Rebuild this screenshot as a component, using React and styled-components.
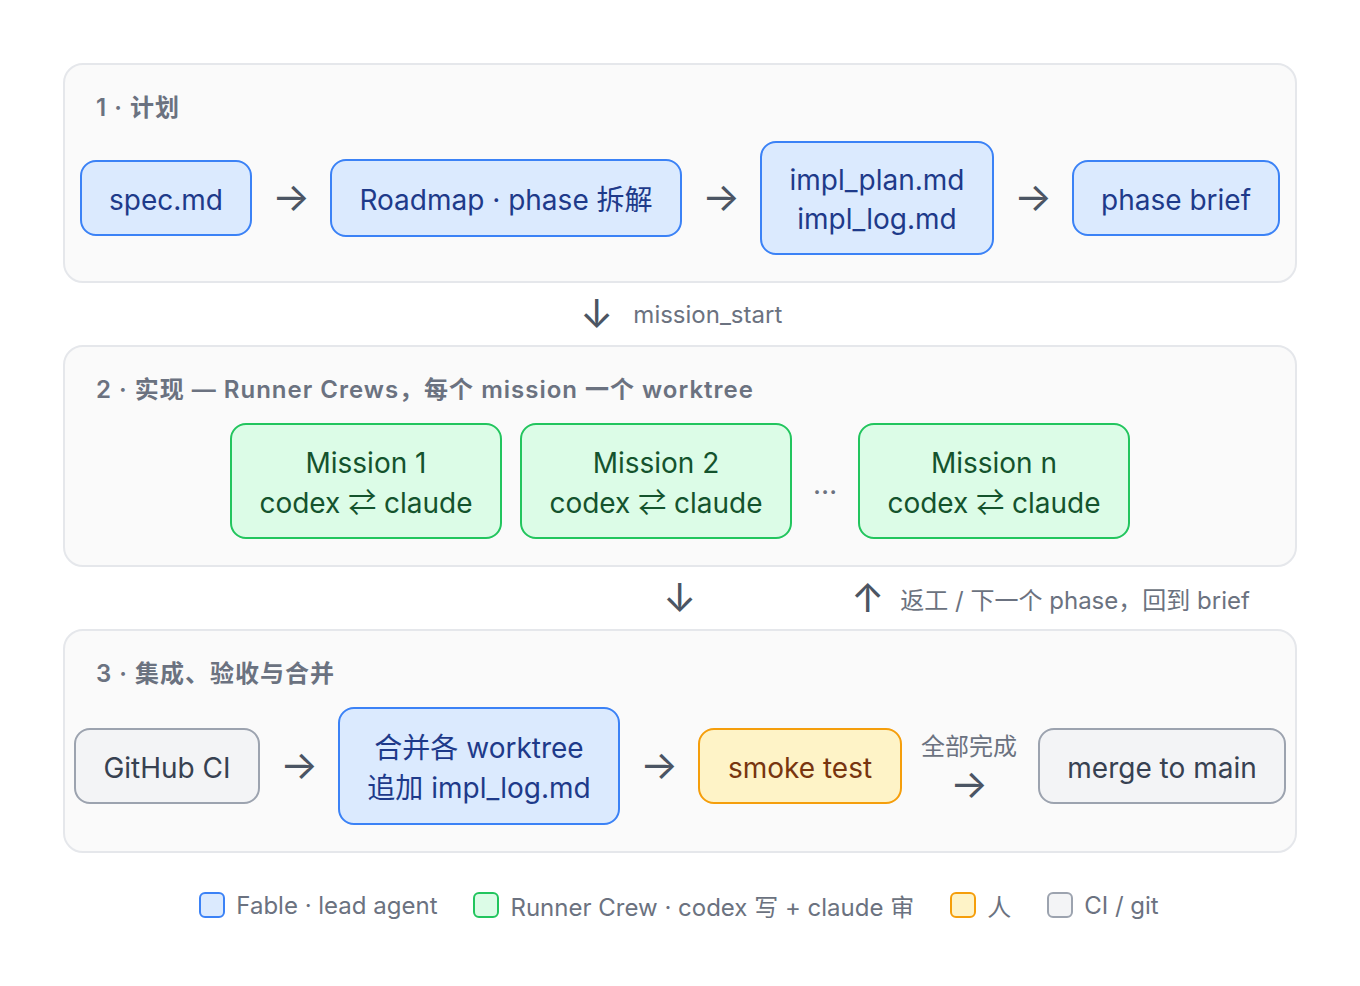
import React from 'react'
import styled, { createGlobalStyle } from 'styled-components'

const fontStack = `Inter, "Noto Sans CJK SC", sans-serif`

const GlobalStyle = createGlobalStyle`
    html, body {
        margin: 0;
        padding: 0;
        background: #ffffff;
        font-family: ${fontStack};
    }
    * { box-sizing: border-box; }
`

const palette = {
    blue: { bg: '#dbeafe', border: '#3b82f6', text: '#1e3a8a' },
    green: { bg: '#dcfce7', border: '#22c55e', text: '#14532d' },
    amber: { bg: '#fef3c7', border: '#f59e0b', text: '#78350f' },
    gray: { bg: '#f3f4f6', border: '#9ca3af', text: '#374151' },
}

const Page = styled.div`
    width: 1360px;
    height: 986px;
    padding: 63px 63px 0;
    display: flex;
    flex-direction: column;
`

const Panel = styled.section`
    height: ${props => props.height}px;
    background: #fafafa;
    border: 2px solid #e5e7eb;
    border-radius: 20px;
    display: flex;
    flex-direction: column;
`

const PanelTitle = styled.div`
    height: 30px;
    margin: 28px 0 0 31px;
    font-size: 24px;
    line-height: 30px;
    font-weight: 600;
    letter-spacing: 1px;
    color: #6b7280;
    white-space: nowrap;
`

const Row = styled.div`
    flex: 1;
    display: flex;
    align-items: center;
    justify-content: center;
    padding-bottom: 8px;
`

const Node = styled.div`
    flex: none;
    width: ${props => props.width}px;
    height: ${props => props.height}px;
    padding-top: 4px;
    display: flex;
    flex-direction: column;
    align-items: center;
    justify-content: center;
    background: ${props => palette[props.kind].bg};
    border: 2px solid ${props => palette[props.kind].border};
    border-radius: 16px;
    color: ${props => palette[props.kind].text};
    font-size: 28px;
    line-height: ${props => props.lineHeight || 40}px;
    white-space: nowrap;
`

const RowArrow = styled.span`
    flex: none;
    width: 78px;
    padding-bottom: 2px;
    text-align: center;
    font-size: 40px;
    line-height: 40px;
    color: #4b5563;
`

const MissionGap = styled.span`
    flex: none;
    width: ${props => props.width}px;
    padding-top: 6px;
    text-align: center;
    font-size: 28px;
    color: #6b7280;
`

const LabeledArrow = styled.div`
    flex: none;
    width: 136px;
    padding: 2px 2px 0 0;
    display: flex;
    flex-direction: column;
    align-items: center;
    font-size: 24px;
    line-height: 34px;
    color: #6b7280;
`

const LabeledGlyph = styled.span`
    font-size: 40px;
    line-height: 40px;
    color: #4b5563;
`

const Connector = styled.div`
    flex: none;
    height: 62px;
    position: relative;
`

const ConnectorItem = styled.div`
    position: absolute;
    left: ${props => props.left}px;
    top: 11px;
    display: flex;
    align-items: center;
    gap: ${props => props.gap || 20}px;
    height: 40px;
    font-size: 24px;
    color: #6b7280;
    white-space: nowrap;
`

const ConnectorGlyph = styled.span`
    font-size: 40px;
    line-height: 40px;
    color: #4b5563;
`

const Legend = styled.div`
    margin-top: 32px;
    padding-right: 2px;
    display: flex;
    justify-content: center;
    align-items: center;
    gap: 36px;
    height: 40px;
`

const LegendItem = styled.div`
    display: flex;
    align-items: center;
    gap: 11px;
    font-size: 24px;
    color: #6b7280;
    white-space: nowrap;
`

const Swatch = styled.span`
    flex: none;
    width: 26px;
    height: 26px;
    border-radius: 6px;
    background: ${props => palette[props.kind].bg};
    border: 2px solid ${props => palette[props.kind].border};
`

const missions = ['Mission 1', 'Mission 2']

export default function App() {
    return (
        <Page>
            <GlobalStyle />

            <Panel height={220}>
                <PanelTitle>1 · 计划</PanelTitle>
                <Row>
                    <Node kind="blue" width={172} height={76}>spec.md</Node>
                    <RowArrow>→</RowArrow>
                    <Node kind="blue" width={352} height={78}>Roadmap · phase 拆解</Node>
                    <RowArrow>→</RowArrow>
                    <Node kind="blue" width={234} height={114} lineHeight={39}>
                        <div>impl_plan.md</div>
                        <div>impl_log.md</div>
                    </Node>
                    <RowArrow>→</RowArrow>
                    <Node kind="blue" width={208} height={76}>phase brief</Node>
                </Row>
            </Panel>

            <Connector>
                <ConnectorItem left={517}>
                    <ConnectorGlyph>↓</ConnectorGlyph>
                    <span>mission_start</span>
                </ConnectorItem>
            </Connector>

            <Panel height={222}>
                <PanelTitle>2 · 实现 — Runner Crews，每个 mission 一个 worktree</PanelTitle>
                <Row>
                    {missions.map((name, index) => (
                        <React.Fragment key={name}>
                            <Node kind="green" width={272} height={116}>
                                <div>{name}</div>
                                <div>codex ⇄ claude</div>
                            </Node>
                            {index === 0 && <MissionGap width={18} />}
                        </React.Fragment>
                    ))}
                    <MissionGap width={66}>…</MissionGap>
                    <Node kind="green" width={272} height={116}>
                        <div>Mission n</div>
                        <div>codex ⇄ claude</div>
                    </Node>
                </Row>
            </Panel>

            <Connector>
                <ConnectorItem left={600}>
                    <ConnectorGlyph>↓</ConnectorGlyph>
                </ConnectorItem>
                <ConnectorItem left={788} gap={16}>
                    <ConnectorGlyph>↑</ConnectorGlyph>
                    <span>返工 / 下一个 phase，回到 brief</span>
                </ConnectorItem>
            </Connector>

            <Panel height={224}>
                <PanelTitle>3 · 集成、验收与合并</PanelTitle>
                <Row>
                    <Node kind="gray" width={186} height={76}>GitHub CI</Node>
                    <RowArrow>→</RowArrow>
                    <Node kind="blue" width={282} height={118}>
                        <div>合并各 worktree</div>
                        <div>追加 impl_log.md</div>
                    </Node>
                    <RowArrow>→</RowArrow>
                    <Node kind="amber" width={204} height={76}>smoke test</Node>
                    <LabeledArrow>
                        <span>全部完成</span>
                        <LabeledGlyph>→</LabeledGlyph>
                    </LabeledArrow>
                    <Node kind="gray" width={248} height={76}>merge to main</Node>
                </Row>
            </Panel>

            <Legend>
                <LegendItem><Swatch kind="blue" />Fable · lead agent</LegendItem>
                <LegendItem><Swatch kind="green" />Runner Crew · codex 写 + claude 审</LegendItem>
                <LegendItem><Swatch kind="amber" />人</LegendItem>
                <LegendItem><Swatch kind="gray" />CI / git</LegendItem>
            </Legend>
        </Page>
    )
}
